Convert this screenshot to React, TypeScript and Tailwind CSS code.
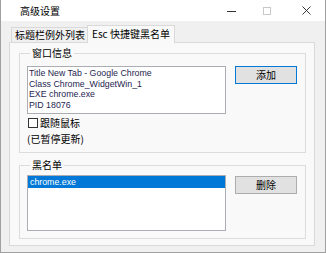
export default function App() {
  return (
    <div className="w-[326px] h-[253px] bg-[#f0f0f0] border-x border-b border-[#a0a0a0] flex flex-col font-['Noto_Sans_CJK_SC',sans-serif] text-[10px] text-black">
      {/* Title bar */}
      <div className="h-[21px] bg-white flex items-center shrink-0">
        <span className="pl-[19px] leading-[12px] text-[10px]">高级设置</span>
        <div className="flex-1" />
        <div className="w-[9px] h-px bg-[#333] mt-[1px]" />
        <div className="ml-[27px] w-[8px] h-[8px] border border-[#c8c8c8]" />
        <svg className="ml-[31px] mr-[14px]" width="9" height="9" viewBox="0 0 9 9">
          <path d="M0.5 0.5 L8.5 8.5 M8.5 0.5 L0.5 8.5" stroke="#222" strokeWidth="0.9" />
        </svg>
      </div>

      {/* Tabs */}
      <div className="mt-[4px] h-[17px] flex items-end pl-[10px] shrink-0">
        <div className="h-[15px] w-[76px] border-t border-l border-[#d9d9d9] bg-[#f0f0f0] flex items-center pl-[3px] leading-[12px]">
          标题栏例外列表
        </div>
        <div className="relative z-10 h-[18px] w-[88px] mb-[-1px] border-t border-x border-[#d9d9d9] bg-[#f9f9f9] flex items-center pl-[4px] pb-[1px] leading-[12px]">
          Esc 快捷键黑名单
        </div>
      </div>

      {/* Panel */}
      <div className="ml-[8px] w-[306px] h-[204px] border border-[#d9d9d9] bg-[#f9f9f9] pt-[4px] pl-[9px] pr-[8px] shrink-0">
        <fieldset className="border border-[#dcdcdc] pl-[7px] pb-[7px]">
          <legend className="ml-[3px] px-[2px] leading-[12px]">窗口信息</legend>
          <div className="pt-[7px] flex items-start">
            <div className="w-[199px] h-[48px] border border-[#abadb3] bg-white pl-[1px] pt-[1px] font-['Liberation_Sans',sans-serif] text-[8.8px] leading-[10.67px] text-[#1e1e50]">
              <div>Title New Tab - Google Chrome</div>
              <div>Class Chrome_WidgetWin_1</div>
              <div>EXE chrome.exe</div>
              <div>PID 18076</div>
            </div>
            <button className="ml-[9px] w-[62px] h-[18px] border border-[#0078d7] bg-[#e1e1e1] flex items-center justify-center leading-[12px] text-[10px]">
              添加
            </button>
          </div>
          <div className="mt-[3px] h-[12px] flex items-center">
            <div className="ml-[1px] w-[10px] h-[10px] border border-[#333] bg-white" />
            <span className="ml-[2px] leading-[12px]">跟随鼠标</span>
          </div>
          <div className="mt-[4px] leading-[12px]">(已暂停更新)</div>
        </fieldset>

        <fieldset className="mt-[6px] border border-[#dcdcdc] pl-[7px] pb-[7px]">
          <legend className="ml-[3px] px-[2px] leading-[12px]">黑名单</legend>
          <div className="pt-[4px] flex items-start">
            <div className="w-[199px] h-[56px] border border-[#abadb3] bg-white">
              <div className="h-[12px] bg-[#0078d7] text-white pl-[2px] font-['Liberation_Sans',sans-serif] text-[8.8px] leading-[12px]">chrome.exe</div>
            </div>
            <button className="ml-[9px] mt-[1px] w-[62px] h-[18px] border border-[#adadad] bg-[#e1e1e1] flex items-center justify-center leading-[12px] text-[10px]">
              删除
            </button>
          </div>
        </fieldset>
      </div>
    </div>
  );
}
